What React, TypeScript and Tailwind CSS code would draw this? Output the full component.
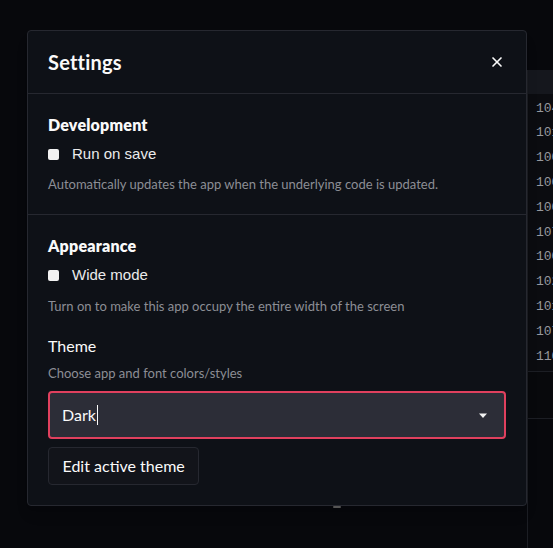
import { X } from 'lucide-react';

const rows = ['1040', '1015', '1008', '1006', '1009', '1072', '1004', '1023', '1018', '1077', '1106'];

function Checkbox({ label }: { label: string }) {
  return (
    <div className="flex h-[20px] items-center gap-[13px]">
      <span className="h-[11px] w-[11px] rounded-[2px] bg-[#f2f2f2]" />
      <span className="font-['Liberation_Sans',sans-serif] text-[15px] leading-[20px] text-[#ebebeb]">{label}</span>
    </div>
  );
}

export default function App() {
  return (
    <div className="relative h-[548px] w-[553px] overflow-hidden bg-[#07080c] font-['Lato',sans-serif]">
      {/* app behind the overlay */}
      <div className="flex h-full justify-end pt-[70px]">
        <div className="w-[26px] overflow-hidden border-l border-[#1c1e24]">
          <div className="h-[24px] bg-[#15171d]" />
          <div className="bg-[#0b0c10] pb-[2px] pl-[8px] pt-[2px]">
            {rows.map((r) => (
              <div key={r} className="flex h-[24.8px] items-center whitespace-nowrap font-['Liberation_Mono',monospace] text-[13px] text-[#96989e]">
                {r}
              </div>
            ))}
          </div>
          <div className="h-[48px] border-y border-[#1c1e24] bg-[#08090c]" />
        </div>
      </div>

      {/* settings dialog */}
      <div className="absolute left-[27px] top-[30px] w-[500px] rounded-[4px] border border-[#262830] bg-[#0e1117] text-[#fafafa] shadow-lg">
        <div className="flex h-[63px] items-center justify-between border-b border-[#262830] pl-[20px] pr-[21px]">
          <h2 className="text-[20px] font-bold tracking-[0.2px]">Settings</h2>
          <X className="h-[16px] w-[16px]" strokeWidth={2.5} />
        </div>

        <div className="border-b border-[#262830] px-[20px] pb-[20px] pt-[21px]">
          <div className="text-[16px] font-extrabold leading-[20px] tracking-[0.2px]">Development</div>
          <div className="mt-[9px]">
            <Checkbox label="Run on save" />
          </div>
          <p className="mt-[10px] text-[13px] leading-[20px] text-[#8c8e95]">
            Automatically updates the app when the underlying code is updated.
          </p>
        </div>

        <div className="px-[20px] pb-[20px] pt-[21px]">
          <div className="text-[16px] font-extrabold leading-[20px] tracking-[0.2px]">Appearance</div>
          <div className="mt-[9px]">
            <Checkbox label="Wide mode" />
          </div>
          <p className="mt-[11px] text-[13px] leading-[20px] text-[#8c8e95]">
            Turn on to make this app occupy the entire width of the screen
          </p>

          <div className="mt-[18px] text-[16px] leading-[24px] text-[#fafafa]">Theme</div>
          <p className="mt-[5px] text-[13px] leading-[20px] text-[#8c8e95]">Choose app and font colors/styles</p>

          <div className="mt-[8px] flex h-[48px] items-center justify-between rounded-[4px] border-2 border-[#e0405e] bg-[#2c2d37] pl-[12px] pr-[16px]">
            <div className="flex items-center text-[16px] text-[#fafafa]">
              Dark
              <span className="ml-[1px] h-[20px] w-[1px] bg-[#fafafa]" />
            </div>
            <svg width="10" height="6" viewBox="0 0 10 6" className="mt-[2px]">
              <path d="M1 0.5 L9 0.5 L5 5 Z" fill="#f2f2f2" />
            </svg>
          </div>

          <button className="mt-[8px] h-[38px] rounded-[4px] border border-[#262830] bg-[#12141a] px-[13.5px] text-[16px] text-[#fafafa]">
            Edit active theme
          </button>
        </div>
      </div>

      <div className="absolute left-[333px] top-[506px] h-[2px] w-[8px] rounded-full bg-[#555]" />
    </div>
  );
}
